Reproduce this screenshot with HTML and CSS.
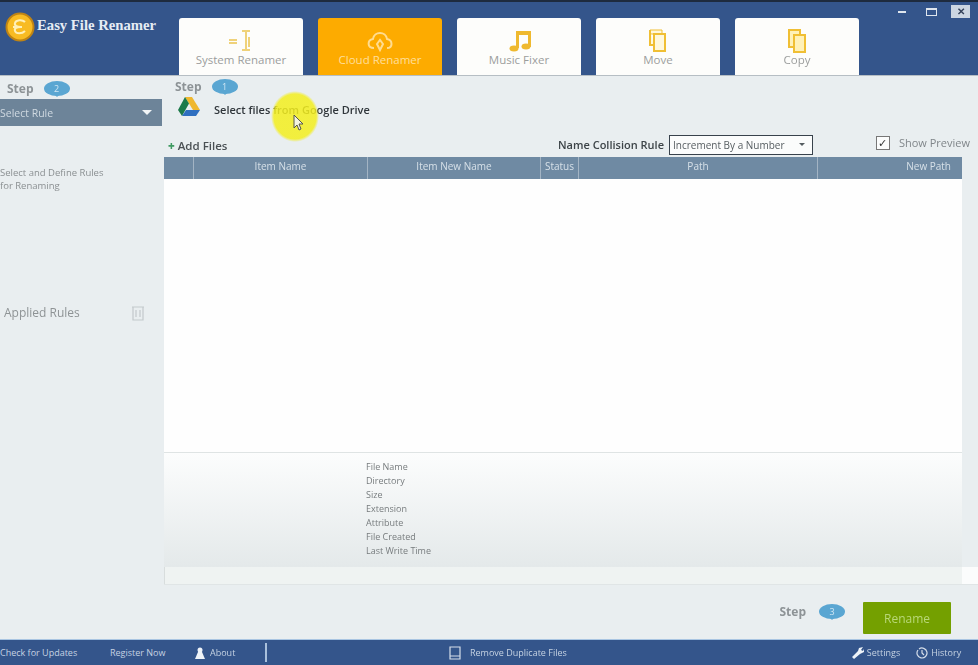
FILE: index.html
```html
<!DOCTYPE html>
<html lang="en">
<head>
    <meta charset="UTF-8">
    <meta name="viewport" content="width=device-width, initial-scale=1.0">
    <title>Easy File Renamer</title>
    <link rel="stylesheet" href="styles.css">
</head>
<body>
    <div class="app">
        <header class="topbar">
            <div class="logo">
                <span class="logo-mark">
                    <svg viewBox="0 0 30 30" width="30" height="30">
                        <circle cx="15" cy="15" r="13.500" fill="#f8bb22" stroke="#bf8414" stroke-width="2"/>
                        <path d="M20 10c-3-3-9-2-10 1s3 4 6 4c-4 0-7 1-6 4s7 3 10 0M8 15h9" fill="none" stroke="#fff0b8" stroke-width="2"/>
                    </svg>
                </span>
                <span class="logo-name">Easy File Renamer</span>
            </div>
            <nav class="tabs">
                <div class="tab">
                    <svg viewBox="0 0 26 24" width="26" height="24" fill="none" stroke="#efd27a" stroke-width="2">
                        <path d="M1 11h8M1 14h8M14 2h8M18 2v19M14 21h8M21 8v10"/>
                    </svg>
                    <span>System Renamer</span>
                </div>
                <div class="tab tab-active">
                    <svg viewBox="0 0 26 24" width="26" height="24" fill="none" stroke="#ffdc90" stroke-width="2">
                        <path d="M7 19c-7 0-7-8-1-9 1-8 13-8 14 0 6 1 6 9 0 9"/>
                        <path d="M10 15l3-4 3 4-3 6z"/>
                    </svg>
                    <span>Cloud Renamer</span>
                </div>
                <div class="tab">
                    <svg class="icon-music" viewBox="0 0 24 24" width="24" height="24" fill="#efb92f">
                        <path d="M7 2h15v16h-3V6H10v13H7z"/>
                        <ellipse cx="5" cy="19.500" rx="4.500" ry="3"/>
                        <ellipse cx="17" cy="17.500" rx="4.500" ry="3"/>
                    </svg>
                    <span>Music Fixer</span>
                </div>
                <div class="tab">
                    <svg viewBox="0 0 24 24" width="24" height="24" fill="#fff8dc" stroke="#f0bf34" stroke-width="2">
                        <path d="M4 1h12v4H4z" stroke-width="1"/>
                        <path d="M4 1v15h4"/>
                        <path d="M8 5h11v17H8z"/>
                    </svg>
                    <span>Move</span>
                </div>
                <div class="tab">
                    <svg viewBox="0 0 24 24" width="24" height="24" fill="#fff1b8" stroke="#f0bf34" stroke-width="2">
                        <path d="M4 1h11v17H4z"/>
                        <path d="M9 6h11v17H9z"/>
                    </svg>
                    <span>Copy</span>
                </div>
            </nav>
            <div class="win-buttons">
                <span class="win-min"></span>
                <span class="win-max"></span>
                <span class="win-close">✕</span>
            </div>
        </header>

        <div class="middle">
            <aside class="sidebar">
                <div class="step">Step <span class="bubble">2</span></div>
                <div class="rule-select">
                    <span>Select Rule</span>
                    <span class="caret"></span>
                </div>
                <p class="rule-hint">Select and Define Rules<br>for Renaming</p>
                <div class="applied">
                    <span>Applied Rules</span>
                    <svg viewBox="0 0 14 16" width="14" height="16" fill="none" stroke="#c3c9cc" stroke-width="1.200">
                        <path d="M1 2h12M2 2v13h10V2M5 5v7M9 5v7"/>
                    </svg>
                </div>
            </aside>

            <main class="main">
                <div class="step step-main">Step <span class="bubble">1</span></div>
                <div class="source">
                    <svg viewBox="0 0 24 22" width="24" height="22">
                        <path d="M8 1h7l8 13h-7z" fill="#efb72e"/>
                        <path d="M8 1l4 6.500L5 20 1 14z" fill="#1c7a4a"/>
                        <path d="M5 20l4-6h14l-4 6z" fill="#2f6fc0"/>
                    </svg>
                    <span>Select files from Google Drive</span>
                </div>
                <div class="toolbar">
                    <span class="add-files"><b>+</b> Add Files</span>
                    <span class="collision">
                        Name Collision Rule
                        <span class="collision-box">Increment By a Number <i></i></span>
                    </span>
                    <span class="preview-check">
                        <span class="checkbox">✓</span>
                        Show Preview
                    </span>
                </div>
                <div class="table-wrap">
                    <div class="table-head">
                        <span></span>
                        <span>Item Name</span>
                        <span>Item New Name</span>
                        <span>Status</span>
                        <span>Path</span>
                        <span class="col-right">New Path</span>
                    </div>
                    <div class="table-body"></div>
                </div>
                <div class="details">
                    <ul class="detail-list">
                        <li>File Name</li>
                        <li>Directory</li>
                        <li>Size</li>
                        <li>Extension</li>
                        <li>Attribute</li>
                        <li>File Created</li>
                        <li>Last Write Time</li>
                    </ul>
                </div>
                <div class="scroll-row">
                    <span class="scroll-track"></span>
                    <span class="scroll-corner"></span>
                </div>
                <div class="actions">
                    <div class="step">Step <span class="bubble">3</span></div>
                    <button type="button" class="rename">Rename</button>
                </div>
            </main>
        </div>

        <footer class="footer">
            <span class="foot-updates">Check for Updates</span>
            <span class="foot-register">Register Now</span>
            <span class="foot-about">
                <svg viewBox="0 0 10 12" width="10" height="12" fill="#eef3f8"><circle cx="5" cy="3" r="2.500"/><path d="M3 5h4l3 7H0z"/></svg>
                About
            </span>
            <span class="foot-divider"></span>
            <span class="foot-duplicates">
                <svg viewBox="0 0 12 14" width="12" height="14" fill="none" stroke="#d5deea" stroke-width="1.200"><path d="M1 1h10v12H1zM1 10h10"/></svg>
                Remove Duplicate Files
            </span>
            <span class="foot-settings">
                <svg viewBox="0 0 12 12" width="12" height="12" fill="#eef3f8"><path d="M0 10l6-6 1-3 4-1-2 3 2 1 1-2v3l-4 2-6 5z"/></svg>
                Settings
            </span>
            <span class="foot-history">
                <svg viewBox="0 0 12 12" width="12" height="12" fill="none" stroke="#d5deea" stroke-width="1.200"><path d="M3 2a5 5 0 1 1-1 1M6 3v3l2 2"/></svg>
                History
            </span>
        </footer>

        <!-- screen recorder cursor highlight -->
        <div class="cursor-spot">
            <svg viewBox="0 0 12 18" width="12" height="18">
                <path d="M1 1v13l3-3 2 5 2-1-2-5h4z" fill="#f4f4e0" stroke="#55564a" stroke-width="1"/>
            </svg>
        </div>
    </div>
</body>
</html>
```

FILE: styles.css
```css
* {
    box-sizing: border-box;
}
html, body {
    margin: 0;
    padding: 0;
    background: #e9eef0;
}
body {
    font-family: "Open Sans", "Liberation Sans", sans-serif;
    overflow: hidden;
}
.app {
    position: relative;
    width: 978px;
    height: 665px;
    display: flex;
    flex-direction: column;
    overflow: hidden;
    filter: blur(0.7px);
}

/* top bar */
.topbar {
    height: 76px;
    flex: none;
    display: flex;
    background: #34558b;
    border-top: 2px solid #1e2b3e;
    border-bottom: 1px solid #b6bec4;
}
.logo {
    width: 179px;
    flex: none;
    display: flex;
    align-items: flex-start;
    padding: 10px 0 0 5px;
}
.logo-mark {
    width: 32px;
    height: 30px;
    flex: none;
}
.logo-name {
    margin-top: 5px;
    font-family: "Liberation Serif", serif;
    font-size: 14.700px;
    font-weight: bold;
    white-space: nowrap;
    color: #e6ecf4;
}
.tabs {
    display: flex;
    gap: 15px;
    padding-top: 16px;
}
.tab {
    width: 124px;
    height: 57px;
    display: flex;
    flex-direction: column;
    align-items: center;
    padding-top: 11px;
    background: #fdfdfb;
    border-radius: 3px 3px 0 0;
    font-size: 11.500px;
    line-height: 14px;
    color: #9c9e9d;
}
.tab-active {
    background: #fdab00;
    color: #ffdf9c;
}
.icon-music {
    margin-left: 4px;
}
.win-buttons {
    margin-left: auto;
    display: flex;
    align-items: center;
    align-self: flex-start;
    padding: 3px 8px 0 0;
}
.win-min {
    width: 8px;
    height: 2px;
    background: #dfe6ee;
    margin-right: 20px;
}
.win-max {
    width: 11px;
    height: 8px;
    border: 1px solid #dfe6ee;
    border-top-width: 2px;
    margin-right: 14px;
}
.win-close {
    width: 19px;
    height: 13px;
    background: #ccd6e2;
    color: #33415a;
    font-size: 10px;
    font-weight: bold;
    line-height: 13px;
    text-align: center;
}

/* middle */
.middle {
    flex: 1;
    display: flex;
    min-height: 0;
}
.sidebar {
    width: 164px;
    flex: none;
    display: flex;
    flex-direction: column;
    padding-top: 4px;
}
.step {
    display: flex;
    align-items: center;
    gap: 10px;
    height: 16px;
    padding-left: 7px;
    font-size: 12px;
    font-weight: bold;
    color: #8d9396;
}
.bubble {
    position: relative;
    width: 26px;
    height: 15px;
    border-radius: 50%;
    background: #5aa6d2;
    color: #cfe6f3;
    font-size: 9px;
    font-weight: normal;
    line-height: 15px;
    text-align: center;
}
.bubble::after {
    content: "";
    position: absolute;
    left: 10px;
    top: 13px;
    border: 3px solid transparent;
    border-top-color: #5aa6d2;
    border-bottom: 0;
}
.rule-select {
    height: 27px;
    margin-top: 3px;
    margin-right: 2px;
    display: flex;
    align-items: center;
    justify-content: space-between;
    padding-right: 10px;
    background: #6d8499;
    font-size: 10.500px;
    color: #cfd9e1;
}
.caret {
    border: 5px solid transparent;
    border-top-color: #f2f5f7;
    border-bottom: 0;
}
.rule-hint {
    margin: 41px 0 0;
    font-size: 9.500px;
    line-height: 12.500px;
    color: #8a8f91;
}
.applied {
    margin-top: 112px;
    display: flex;
    align-items: center;
    justify-content: space-between;
    padding: 0 19px 0 4px;
    font-size: 12px;
    color: #8e9395;
}

.main {
    flex: 1;
    min-width: 0;
    display: flex;
    flex-direction: column;
    padding-top: 2px;
}
.step-main {
    padding-left: 11px;
    height: 17px;
}
.source {
    display: flex;
    align-items: center;
    gap: 13px;
    height: 21px;
    margin-top: 1px;
    padding-left: 13px;
    font-size: 11px;
    font-weight: 600;
    color: #30363b;
}
.source span {
    margin-top: 6px;
}
.toolbar {
    position: relative;
    display: flex;
    align-items: center;
    height: 23px;
    margin: 16px 0 1px;
    padding-left: 4px;
    font-size: 11.500px;
    color: #3d4448;
}
.add-files {
    width: 390px;
    padding-top: 2px;
    font-weight: 600;
    color: #4a5054;
}
.add-files b {
    color: #3f9a62;
}
.collision {
    display: flex;
    align-items: center;
    gap: 5px;
    font-size: 11px;
    font-weight: 600;
    white-space: nowrap;
}
.collision-box {
    display: flex;
    align-items: center;
    justify-content: space-between;
    width: 144px;
    height: 20px;
    padding: 0 7px 0 3px;
    background: #fbfcfc;
    border: 1px solid #38424c;
    font-size: 10px;
    font-weight: normal;
    color: #555c60;
}
.collision-box i {
    border: 3px solid transparent;
    border-top-color: #555c60;
    border-bottom: 0;
}
.preview-check {
    position: relative;
    margin-left: auto;
    display: flex;
    align-items: center;
    gap: 9px;
    padding: 0 8px 5px 0;
    color: #80868a;
    font-size: 11px;
}
.checkbox {
    width: 14px;
    height: 14px;
    margin-top: 2px;
    background: #fbfcfc;
    border: 1px solid #777;
    color: #333;
    font-size: 11px;
    line-height: 12px;
    text-align: center;
}
.table-wrap {
    width: 798px;
    height: 295px;
    flex: none;
    display: flex;
    flex-direction: column;
}
.table-head {
    height: 22px;
    flex: none;
    display: grid;
    grid-template-columns: 29px 174px 173px 38px 239px 145px;
    background: #6f8aa3;
    font-size: 10px;
    line-height: 19px;
    color: #d6e0e8;
    text-align: center;
}
.table-head span + span {
    border-left: 1px solid #a3b4c4;
}
.table-head .col-right {
    text-align: right;
    padding-right: 11px;
}
.table-body {
    flex: 1;
    background: #fefefe;
}
.details {
    width: 798px;
    height: 115px;
    flex: none;
    border-top: 1px solid #dfe4e4;
    background: linear-gradient(#fcfdfd, #e4e9ea);
    padding: 7px 0 0 202px;
}
.detail-list {
    list-style: none;
    margin: 0;
    padding: 0;
    font-size: 9px;
    line-height: 14px;
    color: #777c7e;
}
.scroll-row {
    height: 18px;
    flex: none;
    display: flex;
    border-bottom: 1px solid #e0e5e6;
}
.scroll-track {
    width: 798px;
    background: #eff3f2;
    border-left: 1px solid #d8dddd;
}
.scroll-corner {
    flex: 1;
    background: #fbfcfc;
}
.actions {
    flex: 1;
    display: flex;
    align-items: flex-start;
    justify-content: flex-end;
    gap: 18px;
    padding: 17px 27px 0 0;
}
.actions .step {
    margin-top: 1px;
    gap: 13px;
}
.rename {
    width: 88px;
    height: 32px;
    background: #74a000;
    border: none;
    border-radius: 1px;
    font-family: inherit;
    font-size: 12px;
    color: #b9d878;
}

/* footer */
.footer {
    position: relative;
    height: 26px;
    flex: none;
    display: flex;
    align-items: center;
    background: #34558b;
    border-top: 1px solid #a9c5e2;
    font-size: 9px;
    color: #c5d2e2;
}
.footer span {
    display: flex;
    align-items: center;
    gap: 5px;
    white-space: nowrap;
}
.foot-updates {
    width: 110px;
}
.foot-register {
    width: 85px;
}
.foot-about {
    width: 70px;
}
.foot-divider {
    width: 2px;
    height: 19px;
    background: #a9c0dc;
    margin-right: 182px;
}
.foot-duplicates {
    gap: 9px !important;
    margin-right: 285px;
}
.foot-settings {
    gap: 3px !important;
    margin-right: 16px;
}
.foot-history {
    gap: 3px !important;
}

.cursor-spot {
    position: absolute;
    left: 271px;
    top: 91px;
    width: 48px;
    height: 51px;
    padding: 23px 0 0 22px;
    border-radius: 50%;
    background: radial-gradient(closest-side, rgba(243, 238, 30, 0.85) 88%, rgba(243, 238, 30, 0));
}
```
